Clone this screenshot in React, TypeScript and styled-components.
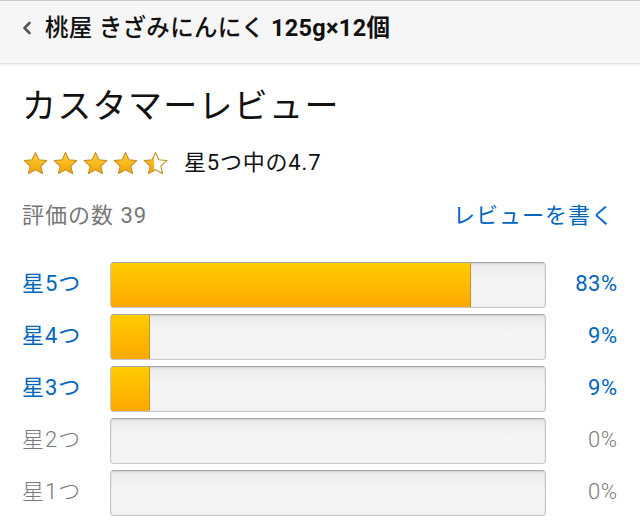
import React from "react";
import styled, { createGlobalStyle } from "styled-components";

const Global = createGlobalStyle`
  html, body { margin: 0; padding: 0; background: #fff; }
  body {
    font-family: Roboto, "Noto Sans CJK JP", "Noto Sans", sans-serif;
    color: #111;
    width: 640px;
    overflow: hidden;
  }
  * { box-sizing: border-box; }
`;

const Header = styled.header`
  height: 64px;
  background: #f6f6f6;
  border-top: 1px solid #c9c9c9;
  border-bottom: 1px solid #e2e2e2;
  box-shadow: 0 1px 2px rgba(0, 0, 0, 0.06);
  display: flex;
  align-items: flex-start;
  padding: 13px 0 0 22px;
  gap: 13px;
`;

const Back = styled.span`
  display: flex;
  align-items: center;
  height: 28px;
`;

const HeaderTitle = styled.h1`
  margin: 0;
  font-size: 23.5px;
  line-height: 28px;
  font-weight: 500;
  letter-spacing: 0.3px;
  color: #111;
  white-space: nowrap;
`;

const Strong = styled.span`
  font-weight: 700;
`;

const Content = styled.main`
  padding: 22px 23px 0 22px;
  display: flex;
  flex-direction: column;
`;

const Heading = styled.h2`
  margin: 0;
  font-size: 34px;
  line-height: 40px;
  font-weight: 400;
  color: #111;
  letter-spacing: 1.3px;
`;

const RatingRow = styled.div`
  margin-top: 24px;
  display: flex;
  align-items: center;
  height: 26px;
  gap: 15px;
`;

const Stars = styled.div`
  display: flex;
  gap: 3px;
  align-items: center;
`;

const RatingText = styled.span`
  font-size: 22px;
  line-height: 26px;
  letter-spacing: 0.8px;
  color: #111;
`;

const CountRow = styled.div`
  margin-top: 22px;
  display: flex;
  justify-content: space-between;
  align-items: center;
  height: 30px;
`;

const Muted = styled.span`
  font-size: 22px;
  letter-spacing: 1px;
  color: #767676;
`;

const Link = styled.a`
  font-size: 22px;
  letter-spacing: 1px;
  color: #0066c0;
  text-decoration: none;
  margin-right: 3px;
`;

const Bars = styled.div`
  margin-top: 34px;
  display: flex;
  flex-direction: column;
  gap: 6px;
`;

const BarRow = styled.div`
  display: grid;
  grid-template-columns: 88px 1fr 71px;
  align-items: center;
  height: 46px;
`;

const Label = styled.span<{ $active: boolean }>`
  font-size: 22px;
  line-height: 26px;
  padding-bottom: 3px;
  letter-spacing: 1px;
  color: ${(p) => (p.$active ? "#0066c0" : "#7a7a7a")};
  font-weight: ${(p) => (p.$active ? 400 : 300)};
`;

const Pct = styled(Label)`
  text-align: right;
  letter-spacing: 0.5px;
  margin-right: -0.5px;
`;

const Track = styled.div`
  position: relative;
  height: 46px;
  border-radius: 4px;
  border: 1px solid #c6c6c6;
  border-top-color: #a9a9a9;
  background: linear-gradient(#ebebeb, #f4f4f4 40%, #f3f3f3);
  box-shadow: inset 0 1px 2px rgba(0, 0, 0, 0.12);
  overflow: hidden;
`;

const Fill = styled.div`
  position: absolute;
  left: -1px;
  top: -1px;
  bottom: -1px;
  border: 1px solid #c89411;
  border-radius: 4px 0 0 4px;
  background: linear-gradient(#ffcd00, #ffba00 50%, #ffa800);
`;

const Chevron = () => (
  <svg width="10" height="14" viewBox="0 0 10 14">
    <polyline
      points="7.5,2 2.5,7 7.5,12"
      fill="none"
      stroke="#555"
      strokeWidth="2.6"
      strokeLinecap="round"
      strokeLinejoin="round"
    />
  </svg>
);

const StarIcon = ({ fill, id }: { fill: number; id: string }) => {
  const d =
    "M13.5 1.6 L16.9 8.7 L24.8 9.6 L18.9 15 L20.5 22.6 L13.5 18.8 L6.5 22.6 L8.1 15 L2.2 9.6 L10.1 8.7 Z";
  return (
    <svg width="27" height="24" viewBox="0 0 27 24">
      <defs>
        <linearGradient id={`g-${id}`} x1="0" y1="0" x2="0" y2="1">
          <stop offset="0" stopColor="#ffd23a" />
          <stop offset="1" stopColor="#f2a100" />
        </linearGradient>
        <clipPath id={`c-${id}`}>
          <rect x="0" y="0" width={27 * fill} height="24" />
        </clipPath>
      </defs>
      <path d={d} fill="#fff" />
      <path d={d} fill={`url(#g-${id})`} clipPath={`url(#c-${id})`} />
      <path d={d} fill="none" stroke="#c8902a" strokeWidth="1.1" strokeLinejoin="round" />
    </svg>
  );
};

const rows = [
  { label: "星5つ", pct: 83 },
  { label: "星4つ", pct: 9 },
  { label: "星3つ", pct: 9 },
  { label: "星2つ", pct: 0 },
  { label: "星1つ", pct: 0 },
];

export default function App() {
  return (
    <>
      <Global />
      <Header>
        <Back>
          <Chevron />
        </Back>
        <HeaderTitle>
          桃屋 きざみにんにく <Strong>125g×12個</Strong>
        </HeaderTitle>
      </Header>
      <Content>
        <Heading>カスタマーレビュー</Heading>
        <RatingRow>
          <Stars>
            {[1, 1, 1, 1, 0.45].map((f, i) => (
              <StarIcon key={i} fill={f} id={`s${i}`} />
            ))}
          </Stars>
          <RatingText>星5つ中の4.7</RatingText>
        </RatingRow>
        <CountRow>
          <Muted>評価の数 39</Muted>
          <Link href="#">レビューを書く</Link>
        </CountRow>
        <Bars>
          {rows.map((r) => (
            <BarRow key={r.label}>
              <Label $active={r.pct > 0}>{r.label}</Label>
              <Track>
                {r.pct > 0 && <Fill style={{ width: `calc(${r.pct}% + 1px)` }} />}
              </Track>
              <Pct $active={r.pct > 0}>{r.pct}%</Pct>
            </BarRow>
          ))}
        </Bars>
      </Content>
    </>
  );
}
